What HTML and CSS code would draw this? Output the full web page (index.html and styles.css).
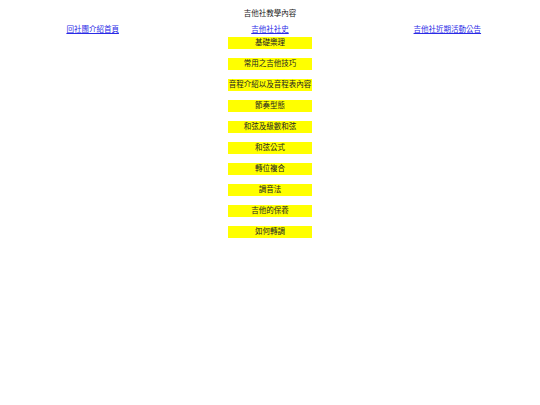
FILE: index.html
```html
<!DOCTYPE html>
<html lang="zh-Hant">
<head>
<meta charset="utf-8">
<title>吉他社教學內容</title>
<link rel="stylesheet" href="styles.css">
</head>
<body>
<div class="title">吉他社教學內容</div>
<div class="links">
  <div class="cell"><a href="#">回社團介紹首頁</a></div>
  <div class="cell"><a href="#">吉他社社史</a></div>
  <div class="cell"><a href="#">吉他社近期活動公告</a></div>
</div>
<div class="menu">
  <div class="item">基礎樂理</div>
  <div class="item">常用之吉他技巧</div>
  <div class="item">音程介紹以及音程表內容</div>
  <div class="item">節奏型態</div>
  <div class="item">和弦及級數和弦</div>
  <div class="item">和弦公式</div>
  <div class="item">轉位複合</div>
  <div class="item">調音法</div>
  <div class="item">吉他的保養</div>
  <div class="item">如何轉調</div>
</div>
</body>
</html>
```
FILE: styles.css
```css
html, body {
  margin: 0;
  padding: 0;
  background: #ffffff;
}
body {
  font-family: "Liberation Serif", "Noto Sans CJK TC", serif;
  font-size: 7.5px;
  color: #222222;
}
.title {
  text-align: center;
  padding-top: 9px;
  line-height: 10px;
}
.links {
  display: grid;
  grid-template-columns: 1fr 1fr 1fr;
  margin: 6px 4px 0;
  line-height: 10px;
}
.cell {
  text-align: center;
}
.cell a {
  color: #2a2ae6;
  text-decoration: underline;
}
.menu {
  display: flex;
  flex-direction: column;
  align-items: center;
  gap: 9px;
  margin-top: 2px;
}
.item {
  width: 84px;
  height: 12px;
  line-height: 12px;
  background: #ffff00;
  text-align: center;
  white-space: nowrap;
}
```
